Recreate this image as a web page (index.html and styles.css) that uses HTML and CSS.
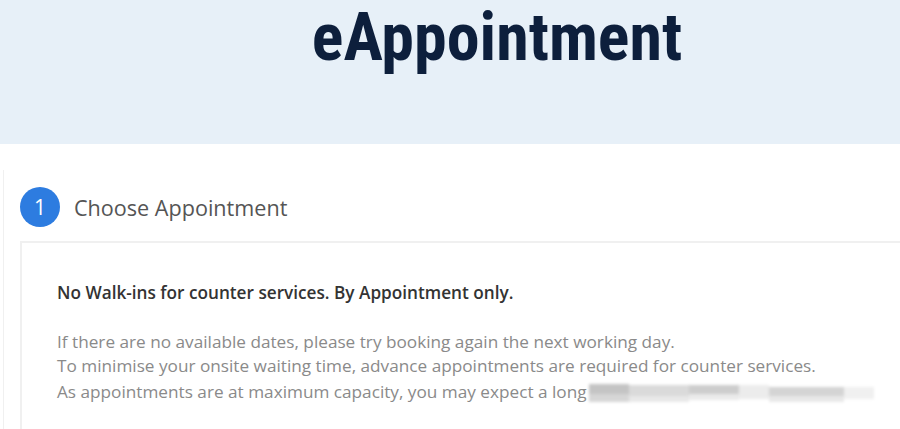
FILE: index.html
```html
<!DOCTYPE html>
<html lang="en">
<head>
<meta charset="utf-8">
<title>eAppointment</title>
<link rel="stylesheet" href="styles.css">
</head>
<body>
<header class="banner">
  <h1 class="title">eAppointment</h1>
</header>
<main class="panel">
  <div class="step-head">
    <span class="step-num">1</span>
    <h2 class="step-title">Choose Appointment</h2>
  </div>
  <section class="step-body">
    <p class="notice">No Walk-ins for counter services. By Appointment only.</p>
    <p class="info">If there are no available dates, please try booking again the next working day.<br>To minimise your onsite waiting time, advance appointments are required for counter services.<br>As appointments are at maximum capacity, you may expect a long<span class="redact" aria-hidden="true"><i class="b1"></i><i class="b2"></i><i class="b3"></i><i class="b4"></i><i class="b5"></i><i class="b6"></i></span></p>
  </section>
</main>
</body>
</html>
```
FILE: styles.css
```css
* { box-sizing: border-box; }
html, body { margin: 0; padding: 0; background: #fff; }
body { font-family: "Open Sans", "Liberation Sans", sans-serif; overflow: hidden; }

.banner {
  height: 144px;
  background: #e7f0f8;
  display: flex;
  justify-content: center;
  padding-left: 94px;
}
.title {
  margin: 0;
  font-family: Roboto, "Liberation Sans", sans-serif;
  font-stretch: condensed;
  font-weight: 700;
  font-size: 66px;
  line-height: 76px;
  color: #0d1f3c;
}

.panel {
  margin-top: 26px;
  margin-left: 3px;
  border-left: 1px solid #f0f0f0;
  padding-left: 16px;
  padding-top: 17px;
}
.step-head {
  display: flex;
  align-items: center;
  gap: 14px;
  height: 40px;
}
.step-num {
  width: 40px;
  height: 40px;
  border-radius: 50%;
  background: #2d7ce0;
  color: #fff;
  font-size: 21px;
  display: flex;
  align-items: center;
  justify-content: center;
  flex: none;
}
.step-title {
  margin: 0;
  font-weight: 400;
  font-size: 21.6px;
  color: #555;
}
.step-body {
  margin-top: 14px;
  border-top: 2px solid #f0f0f0;
  border-left: 2px solid #f0f0f0;
  padding: 38px 0 30px 35px;
}
.notice {
  margin: 0;
  font-weight: 600;
  font-size: 17.2px;
  color: #333;
}
.info {
  margin: 26px 0 0;
  font-size: 17.2px;
  line-height: 24px;
  color: #8a8a8a;
  white-space: nowrap;
}
.redact {
  display: inline-flex;
  vertical-align: -10px;
  height: 30px;
  width: 285px;
  filter: blur(1.5px);
  margin-left: 2px;
}
.redact i { display: block; height: 100%; }
.redact .b1 { width: 40px; background: linear-gradient(#fff 0 20%, #c4c4c4 20% 55%, #d6d6d6 55% 80%, #fff 80%); }
.redact .b2 { width: 60px; background: linear-gradient(#fff 0 25%, #dadada 25% 60%, #e8e8e8 60% 80%, #fff 80%); }
.redact .b3 { width: 50px; background: linear-gradient(#fff 0 25%, #cdcdcd 25% 55%, #eaeaea 55% 75%, #fff 75%); }
.redact .b4 { width: 30px; background: linear-gradient(#fff 0 25%, #ececec 25% 70%, #fff 70%); }
.redact .b5 { width: 75px; background: linear-gradient(#fff 0 30%, #d4d4d4 30% 60%, #e8e8e8 60% 80%, #fff 80%); }
.redact .b6 { width: 30px; background: linear-gradient(#fff 0 30%, #f0f0f0 30% 70%, #fff 70%); }
```
